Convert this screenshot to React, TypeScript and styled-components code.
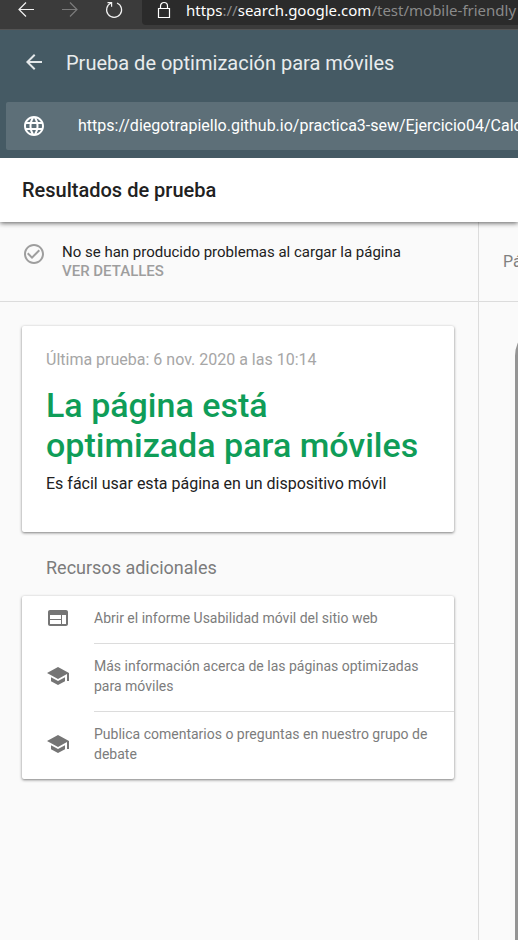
import React from "react";
import styled, { createGlobalStyle } from "styled-components";

const GlobalStyle = createGlobalStyle`
  *, *::before, *::after { box-sizing: border-box; }
  body {
    margin: 0;
    background: #fafafa;
    color: #212121;
    font-family: Roboto, "Liberation Sans", sans-serif;
    font-size: 16px;
  }
  h1, h2, h3, p, ul { margin: 0; padding: 0; font-weight: 400; }
  button { padding: 0; border: 0; background: none; font: inherit; cursor: pointer; }
`;

const Page = styled.div`
  display: flex;
  flex-direction: column;
  min-height: 100vh;
  overflow: hidden;
`;

const BrowserBar = styled.div`
  display: flex;
  height: 30px;
  padding-left: 14px;
  background: #3b3b3b;
  border-bottom: 1px solid #545454;
`;

const BrowserButton = styled.button<{ $dim?: boolean }>`
  display: flex;
  width: 24px;
  height: 20px;
  margin-right: 20px;
  color: ${(p) => (p.$dim ? "#7b7b7b" : "#f2f2f2")};
`;

const AddressField = styled.div`
  display: flex;
  flex: 1;
  min-width: 0;
  height: 25px;
  margin-left: -4px;
  padding-left: 12px;
  background: #2b2b2b;
  border-radius: 0 0 0 4px;
  color: #ffffff;
`;

const Address = styled.span`
  padding-left: 12px;
  font-family: "Noto Sans", "Open Sans", sans-serif;
  font-size: 15px;
  line-height: 21px;
  white-space: nowrap;
`;

const Faint = styled.span`
  color: #8a8a8a;
`;

const AppHeader = styled.header`
  position: relative;
  z-index: 1;
  padding: 0 0 8px 6px;
  background: #455a64;
`;

const TitleRow = styled.div`
  display: flex;
  align-items: center;
  gap: 20px;
  height: 72px;
  padding: 0 16px 8px;
`;

const BackButton = styled.button`
  display: flex;
  color: #e4e8ea;
`;

const AppTitle = styled.h1`
  padding-top: 2px;
  font-size: 20px;
  line-height: 28px;
  color: #e9eced;
`;

const UrlField = styled.label`
  display: flex;
  align-items: center;
  gap: 32px;
  height: 48px;
  padding-left: 16px;
  background: #5d6f78;
  border-radius: 2px 0 0 2px;
  color: #ffffff;
`;

const UrlInput = styled.input`
  flex: 1;
  min-width: 0;
  padding: 0 0 2px;
  border: 0;
  outline: 0;
  background: none;
  color: inherit;
  font: inherit;
  font-size: 16px;
`;

const ResultsBar = styled.div`
  position: relative;
  padding: 18px 22px;
  background: #ffffff;
  box-shadow: 0 1px 5px rgba(0, 0, 0, 0.65);
`;

const ResultsTitle = styled.h2`
  font-size: 20px;
  font-weight: 500;
  line-height: 28px;
`;

const Columns = styled.div`
  display: flex;
  flex: 1;
`;

const MainColumn = styled.main`
  flex: 1;
  min-width: 0;
`;

const PreviewColumn = styled.aside`
  flex: 0 0 40px;
  min-width: 0;
  overflow: hidden;
  display: flex;
  flex-direction: column;
  border-left: 1px solid #dcdcdc;
`;

const Status = styled.section`
  display: flex;
  gap: 16px;
  height: 80px;
  padding: 20px 22px 0;
  border-bottom: 1px solid #dcdcdc;
  color: #9e9e9e;
`;

const StatusText = styled.div`
  font-size: 15px;
  line-height: 19px;
`;

const StatusMessage = styled.p`
  color: #212121;
  line-height: 20px;
`;

const DetailsButton = styled.button`
  display: block;
  color: #9e9e9e;
  font-weight: 500;
  text-transform: uppercase;
`;

const PreviewTitle = styled.h3`
  height: 80px;
  padding: 28px 0 0 24px;
  border-bottom: 1px solid #dcdcdc;
  color: #808080;
  font-size: 16px;
  line-height: 24px;
  white-space: nowrap;
`;

const PhoneFrame = styled.div`
  flex: 1;
  width: 360px;
  margin: 22px 0 0 36px;
  background: #959595;
  border-radius: 32px 32px 0 0;
`;

const Content = styled.div`
  padding: 24px;
  padding-left: 22px;
`;

const Card = styled.section`
  background: #ffffff;
  border-radius: 2px;
  box-shadow: 0 1px 3px rgba(0, 0, 0, 0.5);
`;

const VerdictCard = styled(Card)`
  padding: 24px 24px 36px;
`;

const TestDate = styled.p`
  color: #a6a6a6;
  font-size: 16px;
  line-height: 20px;
`;

const Verdict = styled.h2`
  padding: 15px 0 7px;
  color: #0f9d58;
  font-size: 34px;
  font-weight: 500;
  line-height: 40px;
`;

const Summary = styled.p`
  line-height: 24px;
`;

const SectionTitle = styled.h3`
  padding: 23px 24px 15px;
  color: #7c7c7c;
  font-size: 18px;
  line-height: 26px;
`;

const ResourceList = styled.ul`
  list-style: none;
`;

const ResourceItem = styled.li`
  display: flex;
  padding-left: 24px;
  color: #757575;

  & + & > a { border-top: 1px solid #dcdcdc; }
`;

const ResourceIcon = styled.span`
  display: flex;
  align-items: center;
  width: 48px;
  padding-bottom: 3px;
`;

const ResourceLink = styled.a`
  flex: 1;
  padding: 12px 24px 15px 0;
  color: #7c7c7c;
  font-size: 14px;
  line-height: 20px;
  text-decoration: none;
`;

const WEB =
  "M20 4H4c-1.1 0-1.99.9-1.99 2L2 18c0 1.1.9 2 2 2h16c1.1 0 2-.9 2-2V6c0-1.1-.9-2-2-2zm-5 14H4v-4h11v4zm0-5H4V9h11v4zm5 5h-4V9h4v9z";
const SCHOOL = "M5 13.18v4L12 21l7-3.82v-4L12 17l-7-3.82zM12 3L1 9l11 6 9-4.91V17h2V9L12 3z";
const CHECK =
  "M16.59 7.58L10 14.17l-3.59-3.58L5 12l5 5 8-8zM12 2C6.48 2 2 6.48 2 12s4.48 10 10 10 10-4.48 10-10S17.52 2 12 2zm0 18c-4.42 0-8-3.58-8-8s3.58-8 8-8 8 3.58 8 8-3.58 8-8 8z";
const GLOBE =
  "M11.99 2C6.47 2 2 6.48 2 12s4.47 10 9.99 10C17.52 22 22 17.52 22 12S17.52 2 11.99 2zm6.93 6h-2.95c-.32-1.25-.78-2.45-1.38-3.56 1.84.63 3.37 1.91 4.33 3.56zM12 4.04c.83 1.2 1.48 2.53 1.91 3.96h-3.82c.43-1.43 1.08-2.76 1.91-3.96zM4.26 14C4.1 13.36 4 12.69 4 12s.1-1.36.26-2h3.38c-.08.66-.14 1.32-.14 2s.06 1.34.14 2H4.26zm.82 2h2.95c.32 1.25.78 2.45 1.38 3.56-1.84-.63-3.37-1.9-4.33-3.56zm2.95-8H5.08c.96-1.66 2.49-2.93 4.33-3.56C8.81 5.55 8.35 6.75 8.03 8zM12 19.96c-.83-1.2-1.48-2.53-1.91-3.96h3.82c-.43 1.43-1.08 2.76-1.91 3.96zM14.34 14H9.66c-.09-.66-.16-1.32-.16-2s.07-1.35.16-2h4.68c.09.65.16 1.32.16 2s-.07 1.34-.16 2zm.25 5.56c.6-1.11 1.06-2.31 1.38-3.56h2.95c-.96 1.65-2.49 2.93-4.33 3.56zM16.36 14c.08-.66.14-1.32.14-2s-.06-1.34-.14-2h3.38c.16.64.26 1.31.26 2s-.1 1.36-.26 2h-3.38z";
const BACK = "M20 11H7.83l5.59-5.59L12 4l-8 8 8 8 1.41-1.41L7.83 13H20v-2z";

const Icon = ({ path }: { path: string }) => (
  <svg width="24" height="24" viewBox="0 0 24 24" fill="currentColor" aria-hidden="true">
    <path d={path} />
  </svg>
);

const LineIcon = ({ path, width = 24 }: { path: string; width?: number }) => (
  <svg
    width={width}
    height="20"
    viewBox={`0 0 ${width} 20`}
    fill="none"
    stroke="currentColor"
    strokeWidth="1.2"
    aria-hidden="true"
  >
    <path d={path} />
  </svg>
);

const resources = [
  { icon: WEB, label: "Abrir el informe Usabilidad móvil del sitio web" },
  { icon: SCHOOL, label: "Más información acerca de las páginas optimizadas para móviles" },
  { icon: SCHOOL, label: "Publica comentarios o preguntas en nuestro grupo de debate" },
];

export default function App() {
  return (
    <>
      <GlobalStyle />
      <Page>
        <BrowserBar>
          <BrowserButton aria-label="Atrás">
            <LineIcon path="M20 9.5H5M12 2.5L5 9.5l7 7" />
          </BrowserButton>
          <BrowserButton $dim aria-label="Adelante">
            <LineIcon path="M4 9.5H19M12 2.5l7 7-7 7" />
          </BrowserButton>
          <BrowserButton aria-label="Actualizar">
            <LineIcon path="M15 3A7.5 7.5 0 1 1 9.2 3M5.5 2.6H9.6V6.8" />
          </BrowserButton>
          <AddressField>
            <LineIcon width={20} path="M4.5 8.5h11v9h-11zM6.5 8.5V6a3.5 3.5 0 0 1 7 0v2.5" />
            <Address>
              https<Faint>://</Faint>search.google.com<Faint>/test/mobile-friendly</Faint>
            </Address>
          </AddressField>
        </BrowserBar>

        <AppHeader>
          <TitleRow>
            <BackButton aria-label="Volver">
              <Icon path={BACK} />
            </BackButton>
            <AppTitle>Prueba de optimización para móviles</AppTitle>
          </TitleRow>
          <UrlField>
            <Icon path={GLOBE} />
            <UrlInput
              aria-label="URL"
              defaultValue="https://diegotrapiello.github.io/practica3-sew/Ejercicio04/Calculadora.html"
            />
          </UrlField>
        </AppHeader>

        <ResultsBar>
          <ResultsTitle>Resultados de prueba</ResultsTitle>
        </ResultsBar>

        <Columns>
          <MainColumn>
            <Status>
              <Icon path={CHECK} />
              <StatusText>
                <StatusMessage>No se han producido problemas al cargar la página</StatusMessage>
                <DetailsButton>Ver detalles</DetailsButton>
              </StatusText>
            </Status>
            <Content>
              <VerdictCard>
                <TestDate>Última prueba: 6 nov. 2020 a las 10:14</TestDate>
                <Verdict>La página está optimizada para móviles</Verdict>
                <Summary>Es fácil usar esta página en un dispositivo móvil</Summary>
              </VerdictCard>
              <SectionTitle>Recursos adicionales</SectionTitle>
              <Card>
                <ResourceList>
                  {resources.map((r) => (
                    <ResourceItem key={r.label}>
                      <ResourceIcon>
                        <Icon path={r.icon} />
                      </ResourceIcon>
                      <ResourceLink href="#">{r.label}</ResourceLink>
                    </ResourceItem>
                  ))}
                </ResourceList>
              </Card>
            </Content>
          </MainColumn>
          <PreviewColumn>
            <PreviewTitle>Página renderizada</PreviewTitle>
            <PhoneFrame />
          </PreviewColumn>
        </Columns>
      </Page>
    </>
  );
}
